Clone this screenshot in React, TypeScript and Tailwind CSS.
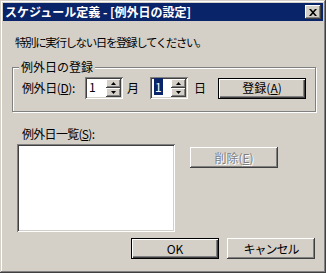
import React from 'react'

// Classic Windows 2000 style bevels
const raised =
  'shadow-[inset_-1px_-1px_0_#404040,inset_1px_1px_0_#ffffff,inset_-2px_-2px_0_#808080,inset_2px_2px_0_#d4d0c8]'
const sunken =
  'shadow-[inset_1px_1px_0_#808080,inset_-1px_-1px_0_#ffffff,inset_2px_2px_0_#404040,inset_-2px_-2px_0_#d4d0c8]'

function Btn({ children, def, disabled }: { children: React.ReactNode; def?: boolean; disabled?: boolean }) {
  return (
    <div
      className={`w-[88px] h-[21px] shrink-0 flex items-center justify-center bg-[#d4d0c8] ${
        def
          ? 'border border-black shadow-[inset_1px_1px_0_#ffffff,inset_-1px_-1px_0_#404040,inset_-2px_-2px_0_#808080]'
          : raised
      } ${disabled ? 'text-[#808080] [text-shadow:1px_1px_0_#ffffff]' : 'text-black'}`}
    >
      {children}
    </div>
  )
}

function Arrow({ up }: { up?: boolean }) {
  return (
    <svg width="5" height="3" viewBox="0 0 5 3">
      <path d={up ? 'M2.5 0 L5 3 L0 3 Z' : 'M0 0 L5 0 L2.5 3 Z'} fill="#000" />
    </svg>
  )
}

function Spin({ children }: { children: React.ReactNode }) {
  return (
    <div className={`w-[38px] h-[22px] shrink-0 bg-white p-[2px] flex ${sunken}`}>
      <div className="flex-1 pl-[2px] pt-[1px] leading-[14px]">{children}</div>
      <div className="w-[15px] flex flex-col">
        <div className={`h-[9px] bg-[#d4d0c8] flex items-center justify-center ${raised}`}>
          <Arrow up />
        </div>
        <div className={`h-[9px] bg-[#d4d0c8] flex items-center justify-center ${raised}`}>
          <Arrow />
        </div>
      </div>
    </div>
  )
}

export default function App() {
  return (
    <div className='w-[326px] h-[273px] bg-[#d4d0c8] p-[3px] flex flex-col text-[12px] leading-[12px] text-black [font-family:"Noto_Sans_CJK_JP","Noto_Sans",sans-serif] shadow-[inset_-1px_-1px_0_#404040,inset_1px_1px_0_#d4d0c8,inset_-2px_-2px_0_#808080,inset_2px_2px_0_#ffffff]'>
      {/* title bar */}
      <div className="h-[18px] bg-[#0a246a] flex items-center justify-between pl-[2px] pr-[2px]">
        <span className="text-white font-bold">スケジュール定義 - [例外日の設定]</span>
        <div className={`w-[16px] h-[14px] bg-[#d4d0c8] flex items-center justify-center ${raised}`}>
          <svg width="8" height="7" viewBox="0 0 8 7">
            <path d="M0 0h2l2 2.2L6 0h2L5 3.5 8 7H6L4 4.8 2 7H0l3-3.5z" fill="#000" />
          </svg>
        </div>
      </div>

      <div className="mt-[15px] ml-[12px] text-[11.5px] tracking-[-1.4px]">特別に実行しない日を登録してください。</div>

      {/* group box */}
      <div className="relative mt-[19px] ml-[9px] w-[304px] h-[45px] border border-[#808080] shadow-[1px_1px_0_#ffffff,inset_1px_1px_0_#ffffff]">
        <span className="absolute left-[6px] top-[-7px] px-[2px] bg-[#d4d0c8]">例外日の登録</span>
        <div className="mt-[9px] pl-[9px] flex items-center">
          <span className="w-[63px] shrink-0 tracking-[-0.4px]">
            例外日(<u>D</u>):
          </span>
          <Spin>1</Spin>
          <span className="ml-[4px]">月</span>
          <div className="ml-[11px]">
            <Spin>
              <span className="bg-[#0a246a] text-white px-[1px]">1</span>
            </Spin>
          </div>
          <span className="ml-[6px]">日</span>
          <div className="ml-[12px]">
            <Btn def>
              登録(<u>A</u>)
            </Btn>
          </div>
        </div>
      </div>

      <div className="mt-[16px] ml-[19px] tracking-[-0.7px]">
        例外日一覧(<u>S</u>):
      </div>

      <div className="mt-[4px] ml-[14px] flex items-start">
        <div className={`w-[158px] h-[88px] bg-white ${sunken}`} />
        <div className="ml-[15px] mt-[3px]">
          <Btn disabled>
            削除(<u>E</u>)
          </Btn>
        </div>
      </div>

      <div className="mt-[6px] pr-[8px] flex justify-end gap-[8px]">
        <Btn def>OK</Btn>
        <Btn>
          <span className="tracking-[-1px]">キャンセル</span>
        </Btn>
      </div>
    </div>
  )
}
